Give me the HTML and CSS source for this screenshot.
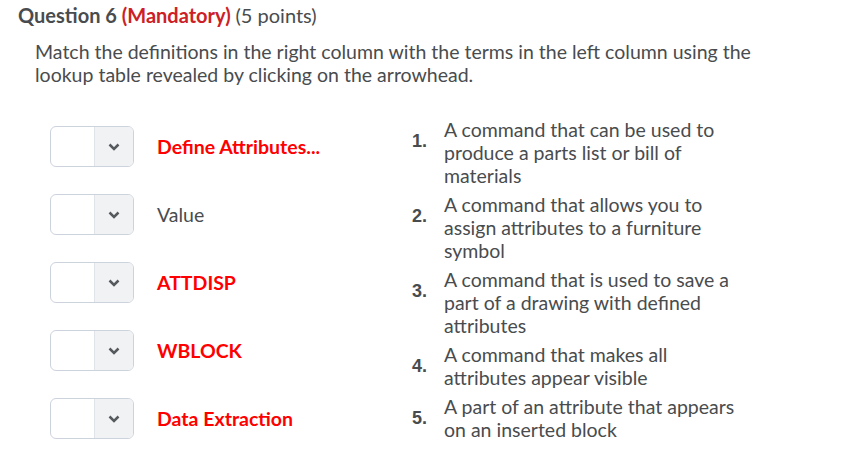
FILE: index.html
```html
<!DOCTYPE html>
<html>
<head>
<meta charset="utf-8">
<link rel="stylesheet" href="styles.css">
</head>
<body>
<div class="question">
  <h2 class="q-title">Question 6 <span class="mandatory">(Mandatory)</span> <span class="points">(5 points)</span></h2>
  <p class="q-text">Match the definitions in the right column with the terms in the left column using the lookup table revealed by clicking on the arrowhead.</p>
  <div class="match">
    <div class="terms">
      <div class="term">
        <div class="select"><span class="sel-value"></span><span class="sel-btn"><svg width="12" height="8" viewBox="0 0 12 8"><path d="M1.5 1.5 L6 6 L10.5 1.5" fill="none" stroke="#565a5c" stroke-width="2.5"/></svg></span></div>
        <span class="term-label red">Define Attributes...</span>
      </div>
      <div class="term">
        <div class="select"><span class="sel-value"></span><span class="sel-btn"><svg width="12" height="8" viewBox="0 0 12 8"><path d="M1.5 1.5 L6 6 L10.5 1.5" fill="none" stroke="#565a5c" stroke-width="2.5"/></svg></span></div>
        <span class="term-label">Value</span>
      </div>
      <div class="term">
        <div class="select"><span class="sel-value"></span><span class="sel-btn"><svg width="12" height="8" viewBox="0 0 12 8"><path d="M1.5 1.5 L6 6 L10.5 1.5" fill="none" stroke="#565a5c" stroke-width="2.5"/></svg></span></div>
        <span class="term-label red">ATTDISP</span>
      </div>
      <div class="term">
        <div class="select"><span class="sel-value"></span><span class="sel-btn"><svg width="12" height="8" viewBox="0 0 12 8"><path d="M1.5 1.5 L6 6 L10.5 1.5" fill="none" stroke="#565a5c" stroke-width="2.5"/></svg></span></div>
        <span class="term-label red">WBLOCK</span>
      </div>
      <div class="term">
        <div class="select"><span class="sel-value"></span><span class="sel-btn"><svg width="12" height="8" viewBox="0 0 12 8"><path d="M1.5 1.5 L6 6 L10.5 1.5" fill="none" stroke="#565a5c" stroke-width="2.5"/></svg></span></div>
        <span class="term-label red">Data Extraction</span>
      </div>
    </div>
    <ol class="defs">
      <li class="def"><span class="num">1.</span><span class="def-text">A command that can be used to produce a parts list or bill of materials</span></li>
      <li class="def"><span class="num">2.</span><span class="def-text">A command that allows you to assign attributes to a furniture symbol</span></li>
      <li class="def"><span class="num">3.</span><span class="def-text">A command that is used to save a part of a drawing with defined attributes</span></li>
      <li class="def"><span class="num">4.</span><span class="def-text">A command that makes all attributes appear visible</span></li>
      <li class="def"><span class="num">5.</span><span class="def-text">A part of an attribute that appears on an inserted block</span></li>
    </ol>
  </div>
</div>
</body>
</html>
```
FILE: styles.css
```css
html, body {
  margin: 0;
  padding: 0;
  background: #ffffff;
}

body {
  font-family: Lato, "Open Sans", sans-serif;
  color: #494c4e;
}

.question {
  padding: 0 0 0 18px;
}

.q-title {
  margin: 0;
  padding-top: 3px;
  font-size: 20px;
  line-height: 24px;
  font-weight: 700;
}

.mandatory {
  color: #cd2026;
}

.points {
  font-weight: 400;
}

.q-text {
  margin: 13px 0 0 17px;
  width: 740px;
  font-size: 19.5px;
  line-height: 23px;
}

.match {
  display: flex;
  margin-top: 40px;
}

.terms {
  width: 394px;
  padding-left: 32px;
  box-sizing: border-box;
  display: flex;
  flex-direction: column;
  gap: 27px;
}

.term {
  display: flex;
  align-items: center;
  height: 41px;
}

.select {
  display: flex;
  width: 84px;
  height: 41px;
  box-sizing: border-box;
  border: 1px solid #cdd3dc;
  border-radius: 6px;
  overflow: hidden;
  background: #fff;
}

.sel-value {
  width: 43px;
  border-right: 1px solid #e0e3e8;
}

.sel-btn {
  flex: 1;
  background: #f1f2f4;
  display: flex;
  align-items: center;
  justify-content: center;
}

.term-label {
  margin-left: 23px;
  font-size: 19.5px;
  line-height: 24px;
}

.term-label.red {
  color: #ff0000;
  font-weight: 700;
}

.defs {
  list-style: none;
  margin: -8px 0 0 0;
  padding: 0;
  display: flex;
  flex-direction: column;
  gap: 6px;
}

.def {
  display: flex;
}

.num {
  width: 32px;
  font-family: "Liberation Sans", Arial, sans-serif;
  font-weight: 700;
  font-size: 18px;
  padding-top: 12px;
  line-height: 23px;
}

.def-text {
  width: 295px;
  font-size: 19.5px;
  line-height: 23px;
}
```
